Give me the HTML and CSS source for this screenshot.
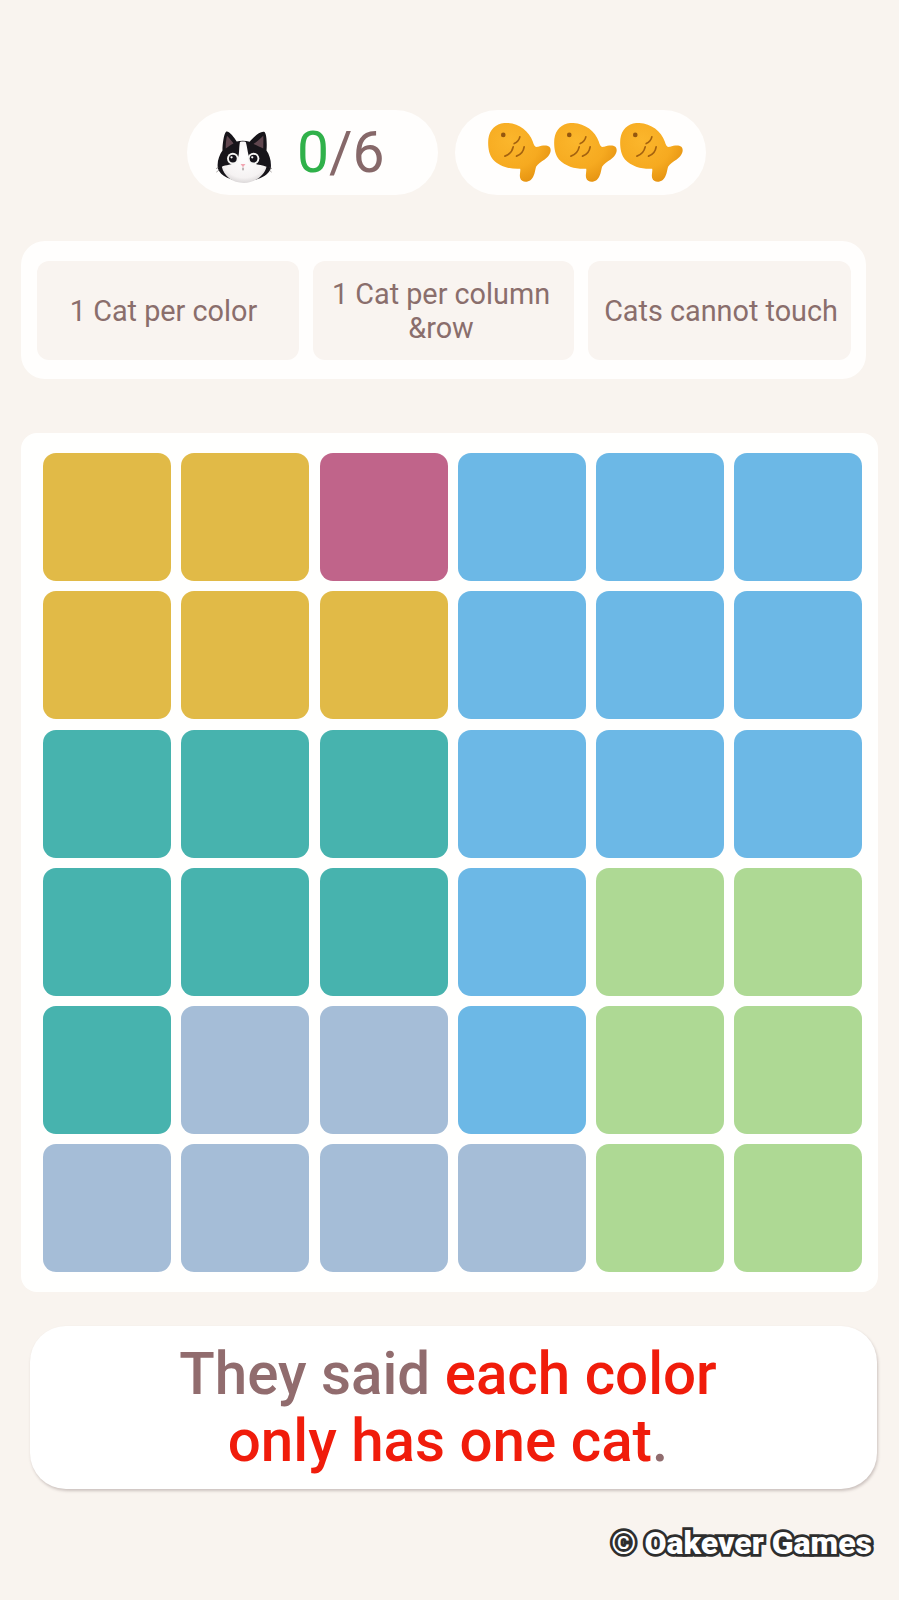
FILE: index.html
```html
<!DOCTYPE html>
<html lang="en">
<head>
<meta charset="utf-8">
<title>Cat puzzle</title>
<link rel="stylesheet" href="styles.css">
</head>
<body>
<svg class="defs" width="0" height="0" aria-hidden="true">
  <defs>
    <radialGradient id="fishFill" cx="0.35" cy="0.3" r="0.8">
      <stop offset="0" stop-color="#fbb62c"/>
      <stop offset="0.6" stop-color="#f6aa20"/>
      <stop offset="1" stop-color="#e3900f"/>
    </radialGradient>
    <symbol id="fish" viewBox="0 0 188 178">
      <path fill="url(#fishFill)" d="M48 0C88-2 122 22 134 56C138 70 142 74 150 72C162 68 176 66 184 72C194 82 184 100 170 110C158 118 150 122 144 132C140 146 140 160 128 172C116 181 100 179 96 166C93 154 98 146 96 138C68 140 34 132 14 110C1 94-2 70 0 48C4 20 22 2 48 0Z"/>
      <circle cx="45" cy="36" r="7" fill="#94570f"/>
      <g fill="none" stroke="#a4620f" stroke-width="5" stroke-linecap="round">
        <path d="M95 42C93 52 87 58 78 62"/>
        <path d="M75 72C72 86 62 96 50 100"/>
        <path d="M108 72C106 86 97 96 85 100"/>
      </g>
    </symbol>
  </defs>
</svg>

<main class="page">
  <section class="status">
    <div class="pill pill-cat">
      <svg class="cat" viewBox="0 0 173 160" aria-hidden="true">
        <defs>
          <radialGradient id="catChin" cx="0.5" cy="0.35" r="0.75">
            <stop offset="0" stop-color="#ffffff"/>
            <stop offset="0.7" stop-color="#f5f2f2"/>
            <stop offset="1" stop-color="#c9c5c6"/>
          </radialGradient>
        </defs>
        <!-- head and ears -->
        <path fill="#17151a" d="M31 2C40-2 56 20 64 32C76 29 92 29 104 33C114 20 138-2 150 3C156 8 158 36 156 60C166 74 172 96 169 116C160 138 130 154 86 155C44 154 14 138 6 116C2 96 10 74 20 60C20 40 24 10 31 2Z"/>
        <path fill="#5f464e" d="M34 14C42 22 50 32 54 38C46 42 38 48 30 54C30 40 31 26 34 14Z"/>
        <path fill="#5f464e" d="M146 14C138 22 124 34 116 40C126 44 138 50 146 54C146 40 147 26 146 14Z"/>
        <!-- blaze and chin -->
        <path fill="url(#catChin)" d="M74 34C70 54 74 74 64 94C50 106 30 104 18 110C24 138 50 160 86 160C122 160 150 136 156 110C142 104 124 106 108 94C98 76 98 54 92 34C86 32 80 32 74 34Z"/>
        <circle cx="52" cy="85" r="18" fill="#f6f6f4"/>
        <circle cx="52" cy="85" r="12" fill="#15131a"/>
        <circle cx="48" cy="81" r="3.5" fill="#fff"/>
        <circle cx="116" cy="85" r="18" fill="#f6f6f4"/>
        <circle cx="116" cy="85" r="12" fill="#15131a"/>
        <circle cx="112" cy="81" r="3.5" fill="#fff"/>
        <path fill="#f2a6b2" d="M76 102H91L83.5 112Z"/>
        <path fill="none" stroke="#6d5a5c" stroke-width="2.6" stroke-linecap="round" d="M83.5 114V120"/>
        <g fill="none" stroke="#55504f" stroke-width="1.6" stroke-linecap="round">
          <path d="M8 112L0 116M10 120L2 126"/>
          <path d="M166 112L173 116M164 120L171 126"/>
        </g>
      </svg>
      <span class="score"><span class="score-now">0</span>/6</span>
    </div>
    <div class="pill pill-fish">
      <svg class="fish" aria-hidden="true"><use href="#fish"/></svg>
      <svg class="fish" aria-hidden="true"><use href="#fish"/></svg>
      <svg class="fish" aria-hidden="true"><use href="#fish"/></svg>
    </div>
  </section>

  <section class="rules">
    <div class="rule rule-first">1 Cat per color</div>
    <div class="rule rule-second">1 Cat per column &amp;row</div>
    <div class="rule rule-third">Cats cannot touch</div>
  </section>

  <section class="board">
    <div class="cell yellow"></div><div class="cell yellow"></div><div class="cell pink"></div><div class="cell blue"></div><div class="cell blue"></div><div class="cell blue"></div>
    <div class="cell yellow"></div><div class="cell yellow"></div><div class="cell yellow"></div><div class="cell blue"></div><div class="cell blue"></div><div class="cell blue"></div>
    <div class="cell teal"></div><div class="cell teal"></div><div class="cell teal"></div><div class="cell blue"></div><div class="cell blue"></div><div class="cell blue"></div>
    <div class="cell teal"></div><div class="cell teal"></div><div class="cell teal"></div><div class="cell blue"></div><div class="cell green"></div><div class="cell green"></div>
    <div class="cell teal"></div><div class="cell slate"></div><div class="cell slate"></div><div class="cell blue"></div><div class="cell green"></div><div class="cell green"></div>
    <div class="cell slate"></div><div class="cell slate"></div><div class="cell slate"></div><div class="cell slate"></div><div class="cell green"></div><div class="cell green"></div>
  </section>

  <section class="caption">
    <p>They said <em>each color</em><br><em>only has one cat</em>.</p>
  </section>

  <footer class="credit">© Oakever Games</footer>
</main>
</body>
</html>
```

FILE: styles.css
```css
html, body {
  margin: 0;
  padding: 0;
}

body {
  background: #f9f4ef;
  font-family: Roboto, "Liberation Sans", sans-serif;
  color: #8a6e6c;
}

.defs {
  display: block;
  height: 0;
}

.page {
  display: flex;
  flex-direction: column;
  width: 899px;
  height: 1600px;
  padding-top: 110px;
  box-sizing: border-box;
}

/* Score and lives */
.status {
  display: flex;
  gap: 17px;
  margin-left: 187px;
}

.pill {
  display: flex;
  align-items: center;
  width: 251px;
  height: 85px;
  border-radius: 43px;
  background: #fffefd;
  box-sizing: border-box;
}

.pill-cat {
  padding-left: 29px;
}

.cat {
  width: 56px;
  height: 52px;
  margin-top: 9px;
}

.score {
  margin-left: 25px;
  font-size: 57px;
  line-height: 1;
  color: #866869;
}

.score-now {
  color: #30b14a;
}

.pill-fish {
  gap: 3px;
  padding-left: 33px;
}

.fish {
  width: 63px;
  height: 59px;
}

/* Rule cards */
.rules {
  display: grid;
  grid-template-columns: 262px 261px 263px;
  gap: 14px;
  width: 845px;
  height: 138px;
  margin: 46px 0 0 21px;
  padding: 20px 16px 19px;
  border-radius: 24px;
  background: #fffefd;
  box-sizing: border-box;
}

.rule {
  display: flex;
  align-items: center;
  justify-content: center;
  border-radius: 12px;
  background: #f9f4f0;
  font-size: 28.8px;
  line-height: 34px;
  text-align: center;
}

.rule-first {
  padding-right: 9px;
}

.rule-second {
  padding: 0 13px 0 8px;
}

.rule-third {
  padding-left: 3px;
}

/* Puzzle grid */
.board {
  display: grid;
  grid-template-columns: repeat(6, 128px);
  grid-auto-rows: 128px;
  gap: 10.3px;
  width: 857px;
  margin: 54px 0 0 21px;
  padding: 20px 22px;
  border-radius: 16px;
  background: #fffffe;
  box-sizing: border-box;
}

.cell {
  border-radius: 13px;
}

.yellow { background: #e1ba47; }
.pink { background: #c0648a; }
.blue { background: #6cb8e6; }
.teal { background: #47b3ae; }
.green { background: #aed994; }
.slate { background: #a5bdd7; }

/* Narration bubble */
.caption {
  display: flex;
  align-items: center;
  justify-content: center;
  width: 847px;
  height: 163px;
  margin: 34px 0 0 30px;
  padding-right: 11px;
  border-radius: 36px;
  background: #fff;
  box-sizing: border-box;
  box-shadow: 1px 2px 3px rgba(90, 70, 70, 0.28);
}

.caption p {
  margin: 0;
  font-size: 58.3px;
  font-weight: 500;
  line-height: 67px;
  text-align: center;
  color: #916c6e;
}

.caption em {
  font-style: normal;
  color: #f01c0b;
}

/* Studio credit */
.credit {
  align-self: flex-end;
  margin: 36px 27px 0 0;
  font-size: 32px;
  font-weight: 900;
  line-height: 36px;
  color: #fff;
  -webkit-text-stroke: 5.5px #2e2e2e;
  paint-order: stroke fill;
}
```
